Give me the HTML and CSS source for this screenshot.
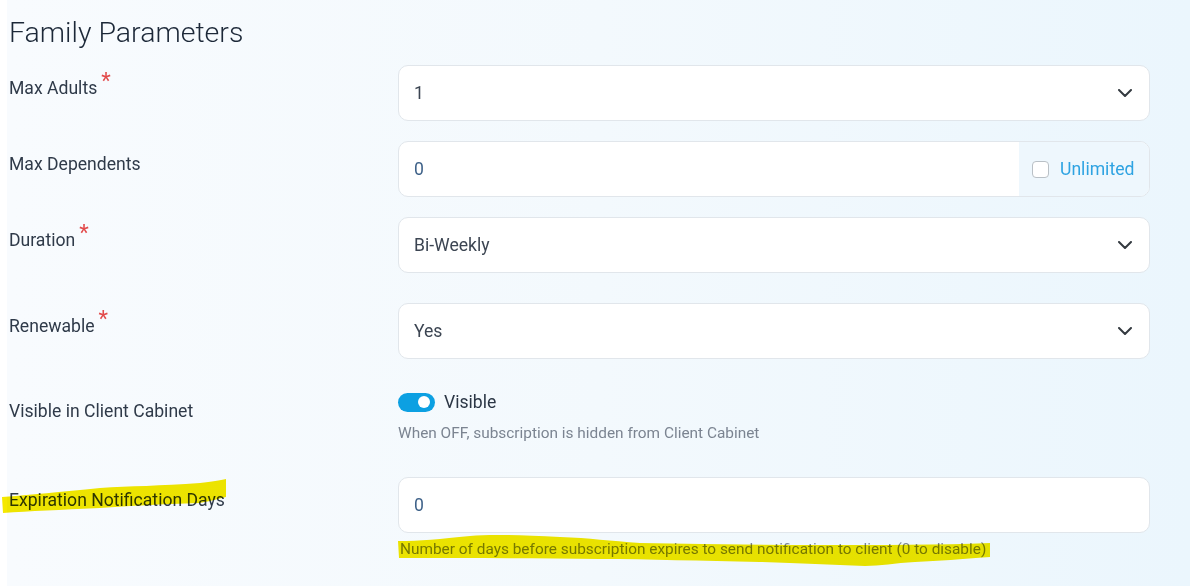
FILE: index.html
```html
<!DOCTYPE html>
<html lang="en">
<head>
<meta charset="utf-8">
<title>Family Parameters</title>
<link rel="stylesheet" href="styles.css">
</head>
<body>
<div class="screen">
  <main class="page">
    <h2 class="title">Family Parameters</h2>

    <div class="row gap-20">
      <div class="label">Max Adults<span class="req">*</span></div>
      <div class="field">
        <div class="control select"><span class="value">1</span>
          <svg class="chev" width="14" height="8" viewBox="0 0 14 8"><path d="M1 1l6 6 6-6" fill="none" stroke="#343a40" stroke-width="2" stroke-linecap="round" stroke-linejoin="round"/></svg>
        </div>
      </div>
    </div>

    <div class="row gap-20">
      <div class="label">Max Dependents</div>
      <div class="field">
        <div class="control group">
          <span class="value input-val">0</span>
          <span class="addon"><span class="check"></span><span class="addon-text">Unlimited</span></span>
        </div>
      </div>
    </div>

    <div class="row gap-30">
      <div class="label">Duration<span class="req">*</span></div>
      <div class="field">
        <div class="control select"><span class="value">Bi-Weekly</span>
          <svg class="chev" width="14" height="8" viewBox="0 0 14 8"><path d="M1 1l6 6 6-6" fill="none" stroke="#343a40" stroke-width="2" stroke-linecap="round" stroke-linejoin="round"/></svg>
        </div>
      </div>
    </div>

    <div class="row gap-29">
      <div class="label">Renewable<span class="req">*</span></div>
      <div class="field">
        <div class="control select"><span class="value">Yes</span>
          <svg class="chev" width="14" height="8" viewBox="0 0 14 8"><path d="M1 1l6 6 6-6" fill="none" stroke="#343a40" stroke-width="2" stroke-linecap="round" stroke-linejoin="round"/></svg>
        </div>
      </div>
    </div>

    <div class="row gap-34">
      <div class="label">Visible in Client Cabinet</div>
      <div class="field">
        <div class="toggle-line"><span class="track"><span class="knob"></span></span><span class="toggle-text">Visible</span></div>
        <div class="help help-toggle">When OFF, subscription is hidden from Client Cabinet</div>
      </div>
    </div>

    <div class="row">
      <div class="label">Expiration Notification Days</div>
      <div class="field">
        <div class="control"><span class="value input-val">0</span></div>
        <div class="help help-input">Number of days before subscription expires to send notification to client (0 to disable)</div>
      </div>
    </div>
  </main>

  <svg class="marks" width="1190" height="586" viewBox="0 0 1190 586" aria-hidden="true">
    <path d="M2 497 C30 495 60 492 100 488 C130 486 160 486 200 483 C212 482 220 480 226 479 L226 497 C215 500 205 502 200 503 C160 504 130 506 100 508 C60 510 30 511 3 513 Z" />
    <path d="M398 541 C420 541 440 539 470 536 C490 534 520 535 560 537 C590 538 610 541 640 543 C700 544 760 545 820 545 C880 545 940 545 990 543 L990 557 C960 559 940 561 915 562 C895 563 880 566 865 566 C830 565 800 563 760 562 C700 561 650 559 600 559 C540 558 470 558 399 558 Z" />
  </svg>
</div>
</body>
</html>
```

FILE: styles.css
```css
* { box-sizing: border-box; }

html, body {
  margin: 0;
  padding: 0;
  background: #ffffff;
}

body {
  font-family: Roboto, "Liberation Sans", Arial, sans-serif;
  color: #2b3645;
}

.screen {
  position: relative;
  width: 1190px;
  height: 586px;
  overflow: hidden;
}

.page {
  margin-left: 7px;
  height: 586px;
  padding: 16px 40px 0 2px;
  background: linear-gradient(90deg, #f8fbfe 0%, #f3f9fd 50%, #ebf6fd 100%);
}

.title {
  margin: 0 0 16px 0;
  font-size: 28.5px;
  line-height: 33px;
  font-weight: 300;
  color: #1c2838;
}

.row {
  display: grid;
  grid-template-columns: 389px 1fr;
}

.gap-20 { margin-bottom: 20px; }
.gap-29 { margin-bottom: 29px; }
.gap-30 { margin-bottom: 30px; }
.gap-34 { margin-bottom: 34px; }

.label {
  padding-top: 11px;
  font-size: 17.6px;
  line-height: 24px;
  color: #2f3a49;
}

.req {
  display: inline-block;
  margin-left: 4px;
  font-size: 22px;
  line-height: 1;
  color: #e24b4b;
  vertical-align: top;
  position: relative;
  top: -6px;
}

.control {
  height: 56px;
  border: 1px solid #e1e6eb;
  border-radius: 10px;
  background: #ffffff;
  display: flex;
  align-items: center;
  padding-left: 15px;
  font-size: 17.6px;
  color: #3c4552;
}

.select {
  justify-content: space-between;
  padding-right: 17px;
}

.input-val {
  color: #3f6289;
}

.group {
  overflow: hidden;
  padding-right: 0;
}

.group .value {
  flex: 1;
}

.addon {
  align-self: stretch;
  width: 130px;
  background: #eef7fd;
  display: flex;
  align-items: center;
  padding-left: 13px;
  gap: 11px;
}

.check {
  width: 17px;
  height: 17px;
  border: 1.5px solid #b9c0c6;
  border-radius: 4px;
  background: #ffffff;
}

.addon-text {
  color: #2ea3e2;
  font-size: 17.6px;
}

.toggle-line {
  height: 28px;
  display: flex;
  align-items: center;
  gap: 9px;
}

.track {
  width: 37px;
  height: 19px;
  border-radius: 10px;
  background: #0ca0e2;
  display: flex;
  align-items: center;
  justify-content: flex-end;
  padding-right: 5px;
}

.knob {
  width: 12px;
  height: 12px;
  border-radius: 50%;
  background: #ffffff;
}

.toggle-text {
  font-size: 17.6px;
  color: #2b3645;
}

.help {
  font-size: 15.4px;
  line-height: 20px;
  color: #7b8491;
}

.help-toggle { margin-top: 7px; }
.help-input { margin-top: 6px; padding-left: 2px; }

.marks {
  position: absolute;
  top: 0;
  left: 0;
  pointer-events: none;
  mix-blend-mode: multiply;
}

.marks path {
  fill: #f5e800;
}
```
